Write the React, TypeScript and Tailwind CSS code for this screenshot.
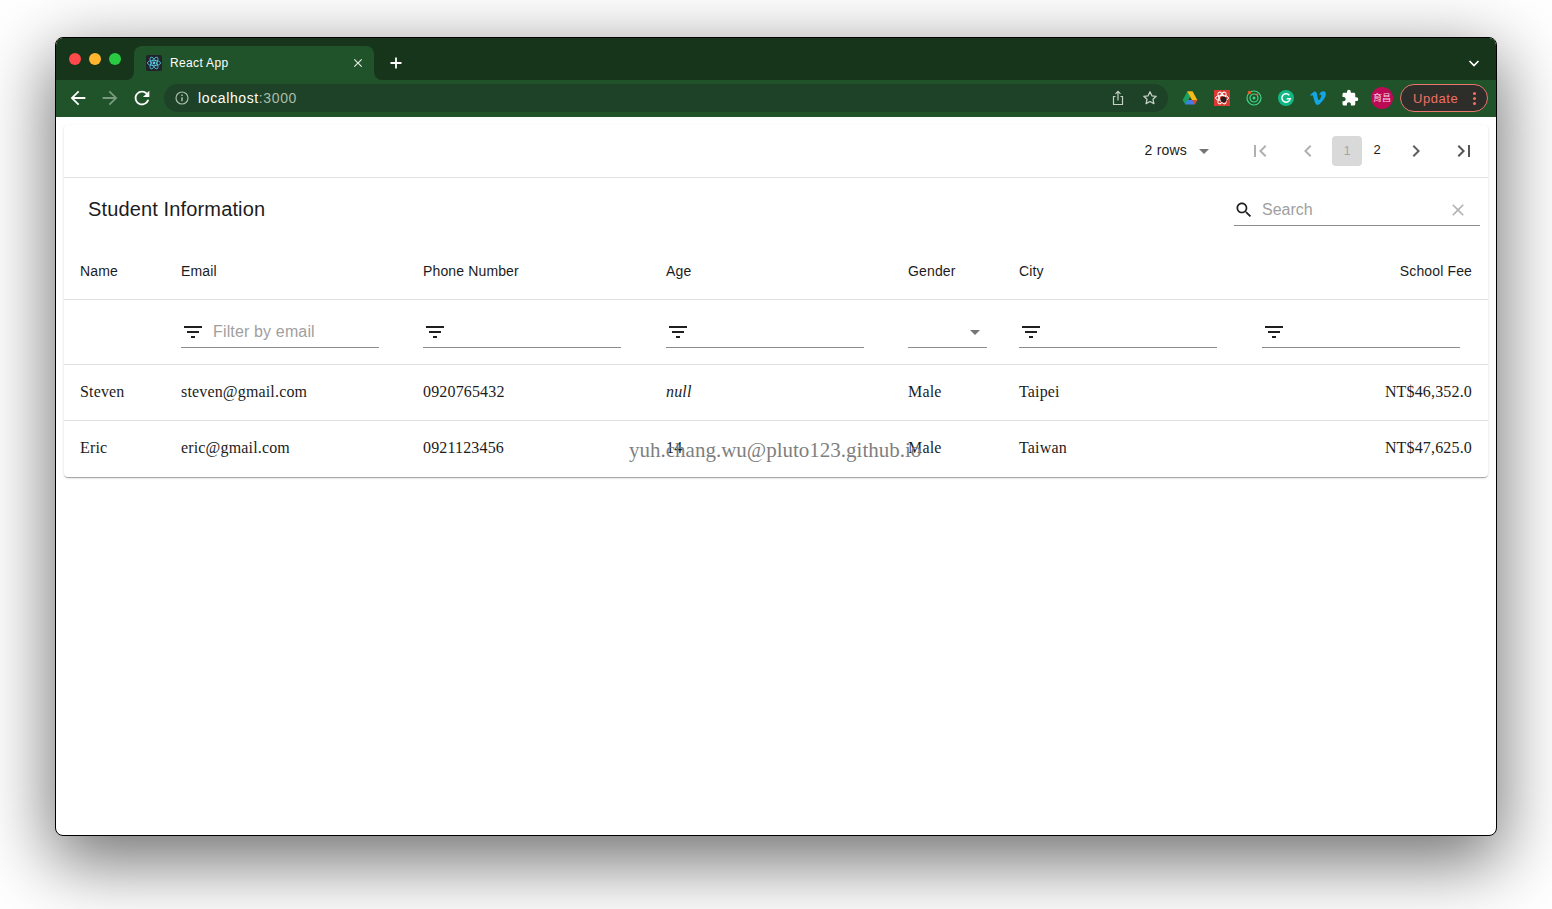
import React from "react";
import { FaVimeoV } from "react-icons/fa";
import { MdExtension } from "react-icons/md";

const P = {
  filter: "M10 18h4v-2h-4v2zM3 6v2h18V6H3zm3 7h12v-2H6v2z",
  search: "M15.5 14h-.79l-.28-.27C15.41 12.59 16 11.11 16 9.5 16 5.91 13.09 3 9.5 3S3 5.91 3 9.5 5.91 16 9.5 16c1.61 0 3.09-.59 4.23-1.57l.27.28v.79l5 4.99L20.49 19l-4.99-5zm-6 0C7.01 14 5 11.99 5 9.5S7.01 5 9.5 5 14 7.01 14 9.5 11.99 14 9.5 14z",
  clear: "M19 6.41L17.59 5 12 10.59 6.41 5 5 6.41 10.59 12 5 17.59 6.41 19 12 13.41 17.59 19 19 17.59 13.41 12z",
  first: "M18.41 16.59L13.82 12l4.59-4.59L17 6l-6 6 6 6zM6 6h2v12H6z",
  last: "M5.59 7.41L10.18 12l-4.59 4.59L7 18l6-6-6-6zM16 6h2v12h-2z",
  prev: "M15.41 7.41L14 6l-6 6 6 6 1.41-1.41L10.83 12z",
  next: "M10 6L8.59 7.41 13.17 12l-4.58 4.59L10 18l6-6z",
  drop: "M7 10l5 5 5-5z",
  back: "M20 11H7.83l5.59-5.59L12 4l-8 8 8 8 1.41-1.41L7.83 13H20v-2z",
  forward: "M12 4l-1.41 1.41L16.17 11H4v2h12.17l-5.58 5.59L12 20l8-8z",
  reload: "M17.65 6.35C16.2 4.9 14.21 4 12 4c-4.42 0-7.99 3.58-7.99 8s3.57 8 7.99 8c3.73 0 6.84-2.55 7.73-6h-2.08c-.82 2.33-3.04 4-5.65 4-3.31 0-6-2.69-6-6s2.69-6 6-6c1.66 0 3.14.69 4.22 1.78L13 11h7V4l-2.35 2.35z",
};

function Icon({ d, className }: { d: string; className: string }) {
  return (
    <svg viewBox="0 0 24 24" fill="currentColor" className={className}>
      <path d={d} />
    </svg>
  );
}

function ReactLogo() {
  return (
    <svg viewBox="0 0 16 16" className="h-4 w-4 rounded-[2px] bg-[#20232a]">
      <g fill="none" stroke="#5ac8e6" strokeWidth="0.8">
        <ellipse cx="8" cy="8" rx="6.6" ry="2.6" />
        <ellipse cx="8" cy="8" rx="6.6" ry="2.6" transform="rotate(60 8 8)" />
        <ellipse cx="8" cy="8" rx="6.6" ry="2.6" transform="rotate(120 8 8)" />
      </g>
      <circle cx="8" cy="8" r="1.4" fill="#5ac8e6" />
    </svg>
  );
}

function Ext({ children }: { children: React.ReactNode }) {
  return <div className="flex h-7 w-8 items-center justify-center">{children}</div>;
}

function FilterBox({ w, placeholder }: { w: string; placeholder?: string }) {
  return (
    <div className={`flex h-8 items-center border-b border-[#8c8c8c] text-[#1f1f1f] ${w}`}>
      <Icon d={P.filter} className="h-6 w-6 shrink-0" />
      {placeholder && <span className="ml-2 text-base tracking-[0.15px] text-[#a0a0a0]">{placeholder}</span>}
    </div>
  );
}

const cols = "grid grid-cols-[101px_242px_243px_242px_111px_243px_242px]";
const rows = [
  ["Steven", "steven@gmail.com", "0920765432", null, "Male", "Taipei", "NT$46,352.0"],
  ["Eric", "eric@gmail.com", "0921123456", "14", "Male", "Taiwan", "NT$47,625.0"],
];
const heads = ["Name", "Email", "Phone Number", "Age", "Gender", "City"];

export default function App() {
  return (
    <div className="h-[909px] overflow-hidden bg-white pl-[55px] pt-[37px] font-['Liberation_Sans',sans-serif]">
      <div className="flex h-[799px] w-[1442px] flex-col overflow-hidden rounded-[8px] border border-black bg-white shadow-[0_22px_70px_4px_rgba(0,0,0,0.56)]">
        {/* title bar */}
        <div className="flex h-[42px] shrink-0 bg-[#17351b] pl-[13px] text-white">
          <div className="flex gap-2 pt-[15px]">
            <span className="h-3 w-3 rounded-full bg-[#fe4a4a]" />
            <span className="h-3 w-3 rounded-full bg-[#ffb52e]" />
            <span className="h-3 w-3 rounded-full bg-[#28cb42]" />
          </div>
          <div className="relative ml-[13px] mt-2 flex h-[34px] w-[240px] items-center rounded-t-lg bg-[#21532a] pl-3 pr-[9px]">
            <div className="absolute -left-2 bottom-0 h-2 w-2 bg-[#21532a]">
              <div className="h-2 w-2 rounded-br-lg bg-[#17351b]" />
            </div>
            <div className="absolute -right-2 bottom-0 h-2 w-2 bg-[#21532a]">
              <div className="h-2 w-2 rounded-bl-lg bg-[#17351b]" />
            </div>
            <ReactLogo />
            <span className="ml-2 text-xs tracking-[0.35px]">React App</span>
            <Icon d={P.clear} className="ml-auto h-[14px] w-[14px] text-[#e6ece7]" />
          </div>
          <div className="ml-[10px] mt-2 flex h-[34px] w-6 items-center justify-center">
            <svg viewBox="0 0 14 14" className="h-[14px] w-[14px]" stroke="white" strokeWidth="1.8">
              <path d="M7 1.5v11M1.5 7h11" />
            </svg>
          </div>
          <div className="ml-auto mr-[15px] mt-2 flex h-[34px] items-center">
            <svg viewBox="0 0 14 14" fill="none" className="h-[14px] w-[14px]" stroke="white" strokeWidth="1.7">
              <path d="M2.5 5l4.5 4.5L11.500 5" />
            </svg>
          </div>
        </div>

        {/* toolbar */}
        <div className="flex h-[37px] shrink-0 items-start bg-[#21532a] pl-[6px] pt-1 text-white">
          <div className="flex h-7 w-8 items-center justify-center">
            <Icon d={P.back} className="h-[22px] w-[22px]" />
          </div>
          <div className="flex h-7 w-8 items-center justify-center">
            <Icon d={P.forward} className="h-[22px] w-[22px] text-[#7a9a80]" />
          </div>
          <div className="flex h-7 w-8 items-center justify-center">
            <Icon d={P.reload} className="h-[22px] w-[22px]" />
          </div>
          <div className="ml-[6px] flex h-7 w-[1004px] items-center rounded-full bg-[#1e4227] pl-[10px] pr-[10px]">
            <svg viewBox="0 0 16 16" fill="none" className="h-4 w-4 text-[#a9bcac]" stroke="currentColor" strokeWidth="1.2">
              <circle cx="8" cy="8" r="6" />
              <path d="M8 7.2v4" strokeWidth="1.5" />
              <path d="M8 4.600v1.400" strokeWidth="1.5" />
            </svg>
            <span className="ml-2 text-sm tracking-[0.62px]">
              localhost<span className="text-[#a9bcac]">:3000</span>
            </span>
            <div className="ml-auto flex items-center gap-4 text-[#c4cfc6]">
              <svg viewBox="0 0 16 16" fill="none" className="h-4 w-4" stroke="currentColor" strokeWidth="1.2">
                <path d="M5.500 6.500H3.500v8h9v-8h-2M8 10.500V1.500M5.500 3.800L8 1.300l2.500 2.500" />
              </svg>
              <svg viewBox="0 0 16 16" fill="none" className="h-4 w-4" stroke="currentColor" strokeWidth="1.300" strokeLinejoin="round">
                <path d="M8 1.800l1.900 4 4.300.5-3.200 3 .9 4.300L8 11.500l-3.900 2.100.9-4.300-3.200-3 4.300-.5z" />
              </svg>
            </div>
          </div>
          <div className="ml-[6px] flex">
            <Ext>
              <svg viewBox="0 0 16 16" className="h-4 w-4">
                <path d="M5.300 1.500h5.400L8 6.200 5.300 11z" fill="#f6bb18" />
                <path d="M10.700 1.500L15.300 10H10L5.300 1.500z" fill="#f6bb18" />
                <path d="M5.300 1.500L8 6.200 3.300 14.500.7 10z" fill="#1aa15f" />
                <path d="M5.500 10h9.800l-2.600 4.500H3z" fill="#3f7fe8" />
                <path d="M10 10h5.300l-2.600 4.500z" fill="#e0452f" />
              </svg>
            </Ext>
            <Ext>
              <svg viewBox="0 0 16 16" className="h-4 w-4">
                <rect width="16" height="16" fill="#d93a31" />
                <g fill="none" stroke="#fff" strokeWidth="1">
                  <ellipse cx="8" cy="8" rx="6.500" ry="2.600" />
                  <ellipse cx="8" cy="8" rx="6.500" ry="2.600" transform="rotate(60 8 8)" />
                  <ellipse cx="8" cy="8" rx="6.500" ry="2.600" transform="rotate(120 8 8)" />
                </g>
                <circle cx="9.500" cy="9.500" r="3" fill="#2a1c1c" />
              </svg>
            </Ext>
            <Ext>
              <svg viewBox="0 0 16 16" className="h-4 w-4" fill="none" stroke="#3fd68a">
                <circle cx="8" cy="8" r="7" strokeWidth="1.200" />
                <circle cx="8" cy="8" r="4" strokeWidth="1.200" />
                <circle cx="8" cy="8" r="1.500" fill="#3fd68a" stroke="none" />
                <circle cx="3.500" cy="2.500" r="1.700" fill="#ef5b2b" stroke="none" />
                <circle cx="11.300" cy="4.600" r="1.100" fill="#ef5b2b" stroke="none" />
              </svg>
            </Ext>
            <Ext>
              <svg viewBox="0 0 16 16" className="h-4 w-4">
                <circle cx="8" cy="8" r="8" fill="#11b886" />
                <path d="M11.300 5.200A4.200 4.200 0 1 0 12.200 8.800H8.800" fill="none" stroke="#fff" strokeWidth="1.500" />
              </svg>
            </Ext>
            <Ext>
              <FaVimeoV className="h-[18px] w-[18px] text-[#13a5e6]" />
            </Ext>
            <Ext>
              <MdExtension className="h-[18px] w-[18px] text-white" />
            </Ext>
            <Ext>
              <div className="flex h-[22px] w-[22px] items-center justify-center rounded-full bg-[#bd0a55] font-['Noto_Sans_CJK_TC',sans-serif] text-[9px] text-[#f5d5e2]">
                育昌
              </div>
            </Ext>
          </div>
          <div className="ml-[2px] flex h-7 w-[88px] items-center rounded-full border border-[#e8766c] bg-[#2d2d2a] pl-3 pr-[11px] text-[13px] text-[#ef6f64]">
            <span className="pt-[1px] tracking-[0.55px]">Update</span>
            <span className="ml-auto flex flex-col gap-[2px]">
              <span className="h-[3px] w-[3px] rounded-full bg-[#ef6f64]" />
              <span className="h-[3px] w-[3px] rounded-full bg-[#ef6f64]" />
              <span className="h-[3px] w-[3px] rounded-full bg-[#ef6f64]" />
            </span>
          </div>
        </div>

        {/* content */}
        <div className="relative flex-1 px-2 pt-2">
          <div className="rounded-[4px] bg-white text-[#1c1c1c] shadow-[0_2px_1px_-1px_rgba(0,0,0,0.2),0_1px_1px_0_rgba(0,0,0,0.14),0_1px_3px_0_rgba(0,0,0,0.12)]">
            {/* pagination */}
            <div className="flex h-[53px] items-center justify-end border-b border-[#e0e0e0] pb-[1px] text-sm">
              <span className="mb-[2px] tracking-[0.2px]">2 rows</span>
              <Icon d={P.drop} className="ml-[5px] mr-5 h-6 w-6 text-[#757575]" />
              <div className="flex h-[30px] w-12 items-center justify-center">
                <Icon d={P.first} className="h-6 w-6 text-[#b0b0b0]" />
              </div>
              <div className="flex h-[30px] w-12 items-center justify-center">
                <Icon d={P.prev} className="h-6 w-6 text-[#b0b0b0]" />
              </div>
              <div className="flex h-[30px] w-[30px] items-center justify-center rounded-[4px] bg-[#d9d9d9] text-xs text-[#a3a3a3]">1</div>
              <div className="flex h-[30px] w-[30px] items-center justify-center text-[13px] text-[#1c1c1c]">2</div>
              <div className="flex h-[30px] w-12 items-center justify-center">
                <Icon d={P.next} className="h-6 w-6 text-[#5f5f5f]" />
              </div>
              <div className="flex h-[30px] w-12 items-center justify-center">
                <Icon d={P.last} className="h-6 w-6 text-[#555555]" />
              </div>
            </div>

            {/* title */}
            <div className="flex h-[67px] items-start justify-between pl-6 pr-2">
              <h1 className="mt-[18px] text-xl leading-[26px] tracking-[0.14px]">Student Information</h1>
              <div className="mt-[16px] flex h-8 w-[246px] items-center border-b border-[#8c8c8c]">
                <Icon d={P.search} className="h-5 w-5 text-[#1f1f1f]" />
                <span className="ml-2 text-base text-[#a0a0a0]">Search</span>
                <Icon d={P.clear} className="ml-auto mr-[12px] h-5 w-5 text-[#b3b3b3]" />
              </div>
            </div>

            {/* header */}
            <div className={`${cols} h-[55px] items-center border-b border-[#e0e0e0] pb-[2px] text-sm tracking-[0.14px]`}>
              {heads.map((h) => (
                <div key={h} className="pl-4">{h}</div>
              ))}
              <div className="pr-4 text-right">School Fee</div>
            </div>

            {/* filters */}
            <div className={`${cols} h-[65px] items-center border-b border-[#e0e0e0]`}>
              <div />
              <div className="pl-4"><FilterBox w="w-[198px]" placeholder="Filter by email" /></div>
              <div className="pl-4"><FilterBox w="w-[198px]" /></div>
              <div className="pl-4"><FilterBox w="w-[198px]" /></div>
              <div className="pl-4">
                <div className="flex h-8 w-[79px] items-center justify-end border-b border-[#8c8c8c]">
                  <Icon d={P.drop} className="h-6 w-6 text-[#757575]" />
                </div>
              </div>
              <div className="pl-4"><FilterBox w="w-[198px]" /></div>
              <div className="pl-4"><FilterBox w="w-[198px]" /></div>
            </div>

            {/* rows */}
            <div className="font-['Liberation_Serif',serif] text-base tracking-[0.16px]">
              {rows.map((r, i) => (
                <div key={i} className={`${cols} h-[56px] items-center pb-[2px] ${i === 0 ? "border-b border-[#e0e0e0]" : ""}`}>
                  {r.map((c, j) => (
                    <div key={j} className={j === 6 ? "pr-4 text-right" : "pl-4"}>
                      {c === null ? <i className="font-medium">null</i> : c}
                    </div>
                  ))}
                </div>
              ))}
            </div>
          </div>

          {/* watermark */}
          <div className="absolute left-[573px] top-[318px] font-['Liberation_Serif',serif] text-[21px] text-[#7f7f7f]">
            yuh.chang.wu@pluto123.github.io
          </div>
        </div>
      </div>
    </div>
  );
}
